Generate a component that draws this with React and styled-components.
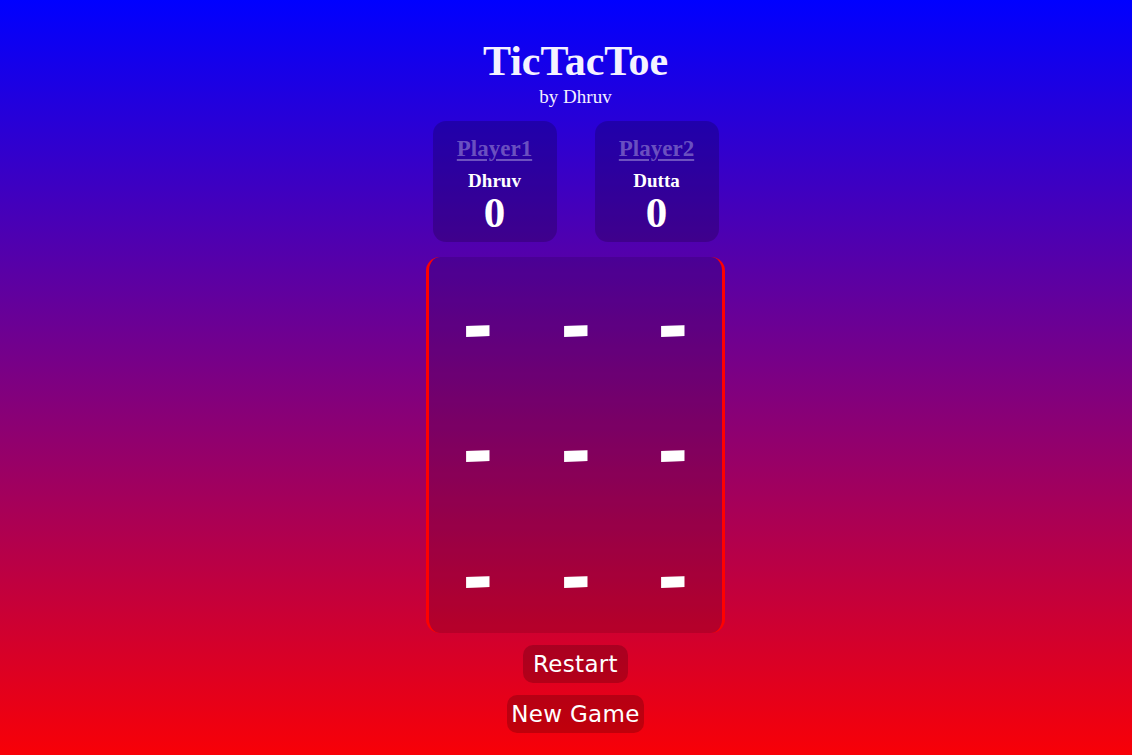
import React from "react";
import styled, { createGlobalStyle } from "styled-components";

const Global = createGlobalStyle`
  html, body { margin: 0; padding: 0; }
  body {
    min-height: 100vh;
    background: linear-gradient(to bottom, #0000ff 0px, #ff0000 775px);
    background-repeat: no-repeat;
    background-color: #ff0000;
    color: #fff;
    font-family: "Liberation Serif", serif;
  }
`;

const Page = styled.main`
  display: flex;
  flex-direction: column;
  align-items: center;
  padding-top: 38px;
  padding-left: 19px;
`;

const Title = styled.h1`
  margin: 0;
  font-family: "Liberation Serif", serif;
  font-weight: 700;
  font-size: 42px;
  line-height: 46px;
  color: #f4f2ff;
`;

const Byline = styled.div`
  font-size: 19px;
  line-height: 22px;
  margin-top: 2px;
  color: #f4f0ff;
`;

const Players = styled.section`
  display: flex;
  gap: 38px;
  margin-top: 13px;
`;

const Card = styled.div`
  width: 124px;
  height: 121px;
  box-sizing: border-box;
  border-radius: 13px;
  background: rgba(0, 0, 0, 0.2);
  display: flex;
  flex-direction: column;
  align-items: center;
  padding-top: 15px;
`;

const PlayerLabel = styled.a`
  font-weight: 700;
  font-size: 23px;
  line-height: 26px;
  color: rgba(255, 255, 255, 0.32);
  text-decoration: underline;
  text-decoration-thickness: 2px;
  text-underline-offset: 3px;
`;

const Name = styled.div`
  font-weight: 700;
  font-size: 19px;
  line-height: 22px;
  margin-top: 8px;
`;

const Score = styled.div`
  font-weight: 700;
  font-size: 43px;
  line-height: 42px;
`;

const Board = styled.section`
  margin-top: 15px;
  width: 299px;
  height: 376px;
  box-sizing: border-box;
  border-left: 3px solid #ff0000;
  border-right: 3px solid #ff0000;
  border-radius: 14px;
  background: rgba(0, 0, 0, 0.12);
  display: grid;
  grid-template-columns: repeat(3, 1fr);
  grid-template-rows: repeat(3, 1fr);
`;

const Cell = styled.button`
  background: transparent;
  border: none;
  padding: 0;
  color: #fff;
  font-family: "DejaVu Sans", sans-serif;
  font-weight: 700;
  font-size: 76px;
  line-height: 1;
  display: flex;
  align-items: center;
  justify-content: center;
  padding-top: 14px;
  transform: skewY(-2deg);
  cursor: pointer;
`;

const Controls = styled.div`
  display: flex;
  flex-direction: column;
  align-items: center;
  gap: 12px;
  margin-top: 12px;
`;

const Action = styled.button`
  height: 38px;
  box-sizing: border-box;
  padding: 0 ${(p) => p.$pad}px;
  border: none;
  border-radius: 10px;
  background: rgba(0, 0, 0, 0.2);
  color: #fff;
  font-family: "DejaVu Sans", sans-serif;
  font-size: 23px;
  letter-spacing: 0.3px;
  line-height: 38px;
  cursor: pointer;
`;

const players = [
  { label: "Player1", name: "Dhruv", score: 0 },
  { label: "Player2", name: "Dutta", score: 0 },
];

export default function App() {
  const cells = Array(9).fill("-");
  return (
    <>
      <Global />
      <Page>
        <Title>TicTacToe</Title>
        <Byline>by Dhruv</Byline>
        <Players>
          {players.map((p) => (
            <Card key={p.label}>
              <PlayerLabel href="#">{p.label}</PlayerLabel>
              <Name>{p.name}</Name>
              <Score>{p.score}</Score>
            </Card>
          ))}
        </Players>
        <Board>
          {cells.map((c, i) => (
            <Cell key={i}>{c}</Cell>
          ))}
        </Board>
        <Controls>
          <Action $pad={10}>Restart</Action>
          <Action $pad={4}>New Game</Action>
        </Controls>
      </Page>
    </>
  );
}
